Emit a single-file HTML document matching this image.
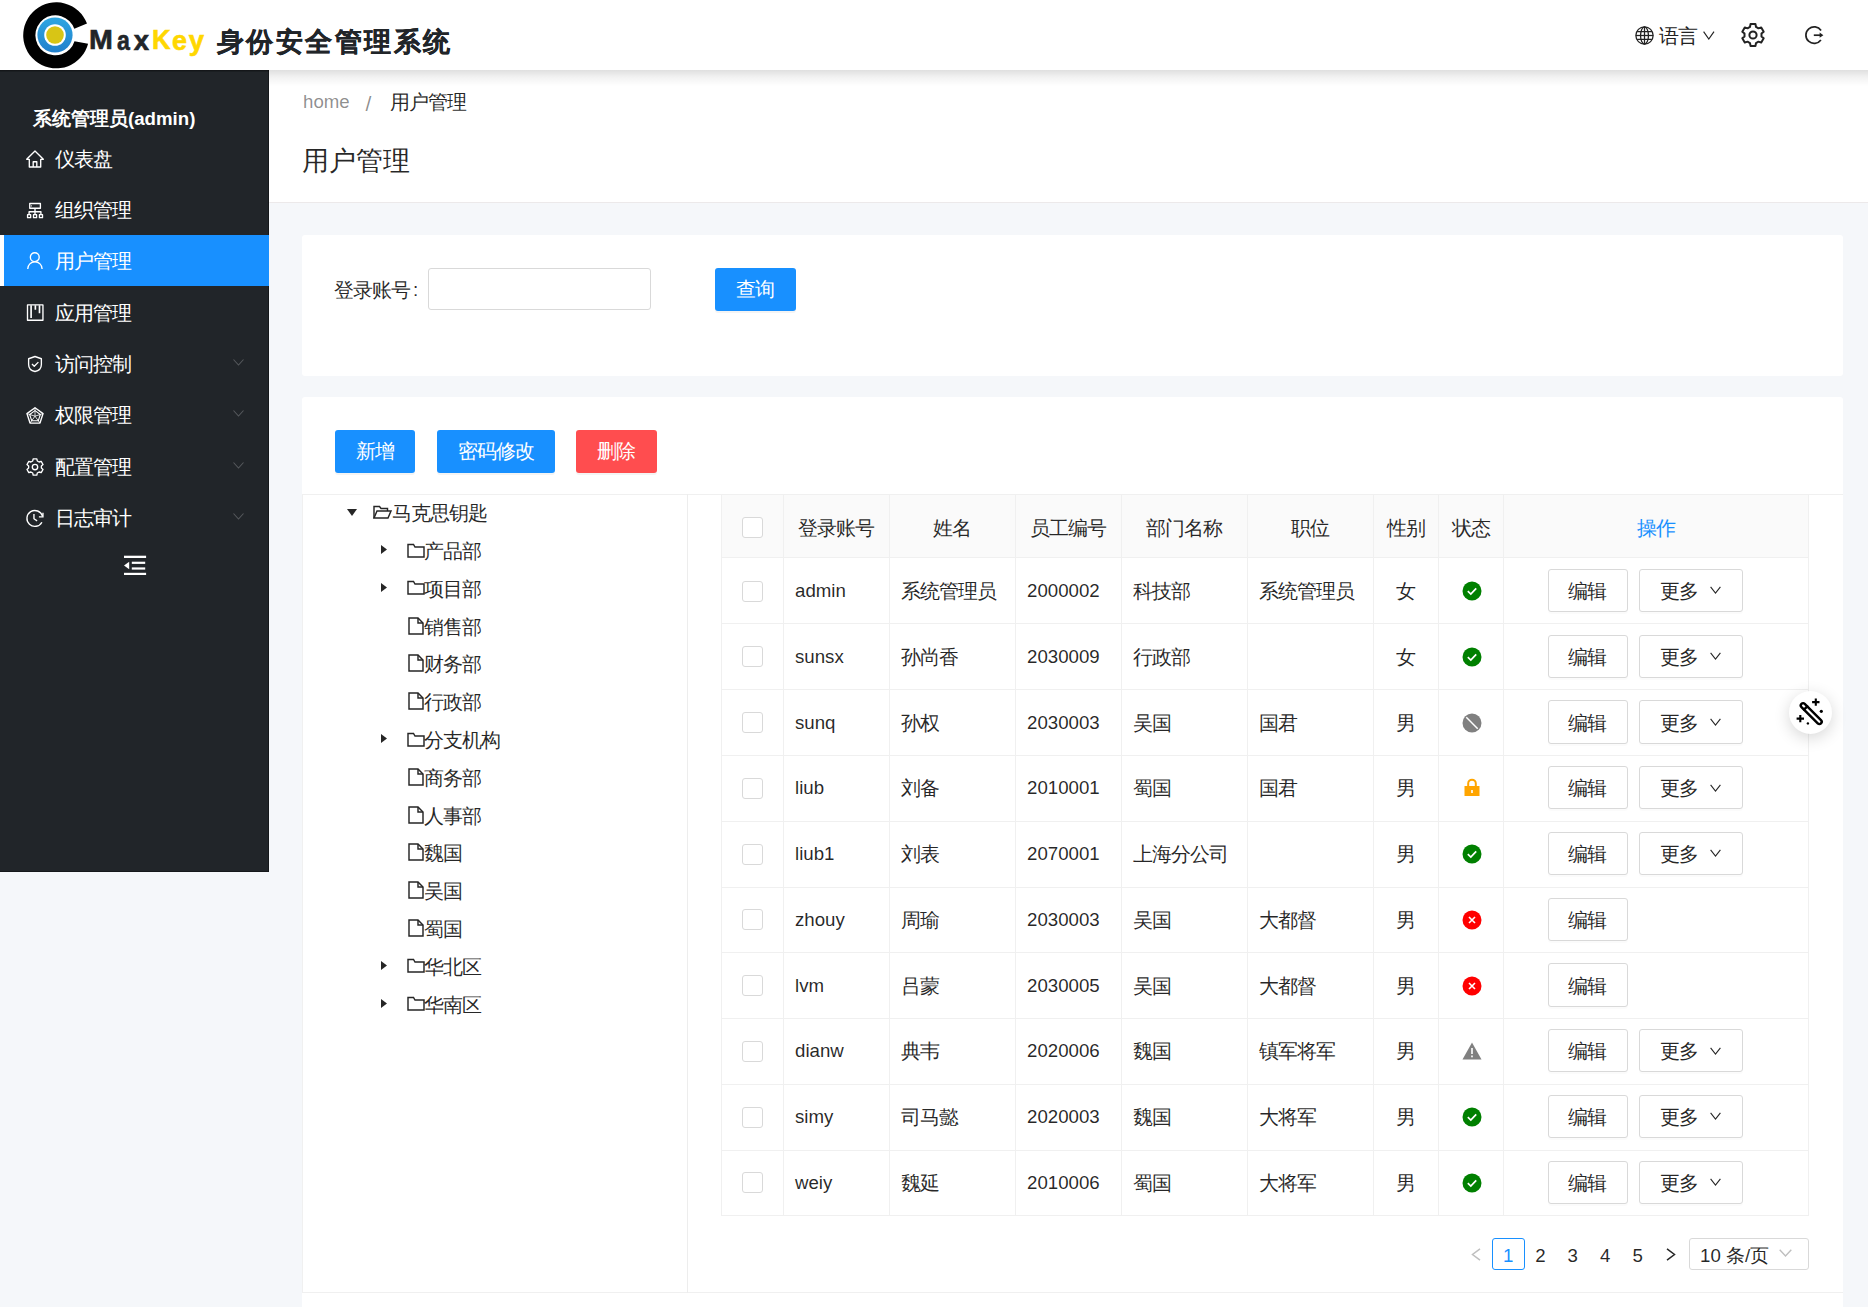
<!DOCTYPE html>
<html><head><meta charset="utf-8"><title>MaxKey</title><style>
*{box-sizing:border-box;margin:0;padding:0}
html,body{width:1868px;height:1307px;overflow:hidden}
body{position:relative;background:#f5f7fa;font-family:"Liberation Sans",sans-serif;color:rgba(0,0,0,.85)}
.t{position:absolute;white-space:nowrap}
.a{position:absolute}
svg{position:absolute;overflow:visible}
.btn{position:absolute;border-radius:3px;}
</style></head>
<body>
<div class="a" style="left:0;top:0;width:1868px;height:70px;background:#fff"></div><svg style="left:0;top:0" width="100" height="70" viewBox="0 0 100 70">
<path fill="#000" d="M86.6 23.2 A33 33 0 1 0 87.7 43.5 L74.1 40.85 A20 20 0 1 1 73.9 28.5 Z" transform="translate(0.4 0.3)"/>
<defs><linearGradient id="lg" x1="0" y1="0" x2="0" y2="1"><stop offset="0" stop-color="#2ea6e2"/><stop offset="1" stop-color="#2180cc"/></linearGradient></defs>
<circle cx="55" cy="35" r="17.6" fill="url(#lg)"/>
<circle cx="55" cy="35" r="10.8" fill="#fff"/>
<circle cx="55" cy="35" r="8.8" fill="#d8c515"/>
</svg><div class="a" style="left:0;top:0;width:0;height:0"><span class="t" style="left:89.2px;top:26.94px;font-size:27px;line-height:27px;font-weight:bold;color:#212529;-webkit-text-stroke:0.6px #212529;transform:scaleX(1.06);transform-origin:0 0">M</span><span class="t" style="left:116.6px;top:26.52px;font-size:27.5px;line-height:27.5px;font-weight:bold;color:#212529;-webkit-text-stroke:0.6px #212529;transform:scaleX(0.84);transform-origin:0 0">a</span><span class="t" style="left:133.7px;top:26.52px;font-size:27.5px;line-height:27.5px;font-weight:bold;color:#212529;-webkit-text-stroke:0.6px #212529;transform:scaleX(1.0);transform-origin:0 0">x</span><span class="t" style="left:152px;top:26.94px;font-size:27px;line-height:27px;font-weight:bold;color:#ffd700;-webkit-text-stroke:0.6px #ffd700;transform:scaleX(0.95);transform-origin:0 0">K</span><span class="t" style="left:171.8px;top:26.52px;font-size:27.5px;line-height:27.5px;font-weight:bold;color:#ffd700;-webkit-text-stroke:0.6px #ffd700;transform:scaleX(0.98);transform-origin:0 0">e</span><span class="t" style="left:188.7px;top:26.52px;font-size:27.5px;line-height:27.5px;font-weight:bold;color:#ffd700;-webkit-text-stroke:0.6px #ffd700;transform:scaleX(1.0);transform-origin:0 0">y</span></div><div class="t" style="left:216.5px;top:22px;font-size:27px;line-height:40px;font-weight:bold;letter-spacing:2.5px;color:#212529;-webkit-text-stroke:0.25px #212529">身份安全管理系统</div><svg style="left:1635.3px;top:25.5px" width="19" height="19" viewBox="0 0 24 24" fill="none" stroke="#222" stroke-width="1.6">
<circle cx="12" cy="12" r="10.9"/><ellipse cx="12" cy="12" rx="5" ry="10.9"/><line x1="12" y1="1.1" x2="12" y2="22.9"/>
<line x1="1.1" y1="12" x2="22.9" y2="12"/><path d="M2.6 7H21.4M2.6 17H21.4"/></svg><div class="t" style="left:1659px;top:22.93px;font-size:19.6px;line-height:26.14px;color:#222;letter-spacing:-0.93px;">语言</div>
<svg style="left:1703px;top:31px" width="12" height="9" viewBox="0 0 12 9" fill="none" stroke="#222" stroke-width="1.15"><path d="M0.6 0.6L5.8 8L11 0.6"/></svg><svg style="left:1740.5px;top:23px" width="24" height="24" viewBox="0 0 24 24" fill="none" stroke="#222" stroke-width="2" stroke-linejoin="round">
<path d="M8.97 3.95 L9.56 1.07 L14.44 1.07 L15.03 3.95 L17.46 5.35 L20.24 4.42 L22.69 8.65 L20.49 10.60 L20.49 13.40 L22.69 15.35 L20.24 19.58 L17.46 18.65 L15.03 20.05 L14.44 22.93 L9.56 22.93 L8.97 20.05 L6.54 18.65 L3.76 19.58 L1.31 15.35 L3.51 13.40 L3.51 10.60 L1.31 8.65 L3.76 4.42 L6.54 5.35Z"/>
<circle cx="12" cy="12" r="3.6"/></svg><svg style="left:1800px;top:20px" width="30" height="30" viewBox="0 0 30 30" fill="none" stroke="#222" stroke-width="1.7">
<path d="M21.08 10.46A8.3 8.3 0 1 0 20.91 19.98"/><path d="M13.8 15.2H20.5"/><path d="M19.6 12.6L23.4 15.2L19.6 17.8Z" fill="#222" stroke="none"/></svg><div class="a" style="left:0;top:70px;width:269px;height:802px;background:#212529;border-right:1px solid #15181b;border-bottom:1px solid #15181b"></div><div class="t" style="left:33px;top:106.43px;font-size:18.67px;line-height:26.14px;color:#fff;font-weight:bold;">系统管理员(admin)</div>
<svg style="left:26px;top:150px" width="18" height="18" viewBox="0 0 24 24" fill="none" stroke="#fff" stroke-width="1.8" stroke-linejoin="round"><path d="M0.9 12.4L12 1.2L23.1 12.4H19.6V22.7H4.4V12.4Z"/><path d="M9.6 22.7V15.6H14.4V22.7"/></svg><div class="t" style="left:55px;top:145.93px;font-size:19.6px;line-height:26.14px;color:#fff;letter-spacing:-0.93px;">仪表盘</div>
<svg style="left:26px;top:201px" width="18" height="18" viewBox="0 0 24 24" fill="none" stroke="#fff" stroke-width="1.8" stroke-linejoin="round"><rect x="5" y="3.3" width="14.2" height="6.4"/><rect x="2.1" y="18.2" width="4.1" height="4"/><rect x="10" y="18.2" width="4.1" height="4"/><rect x="17.9" y="18.2" width="4.1" height="4"/><path d="M12 9.7V14.3M4.1 18.2V14.3H19.9V18.2M12 14.3V18.2"/><path d="M7.3 5.8V7.3" stroke-width="1.2"/></svg><div class="t" style="left:55px;top:196.93px;font-size:19.6px;line-height:26.14px;color:#fff;letter-spacing:-0.93px;">组织管理</div>
<div class="a" style="left:0;top:234.5px;width:269px;height:51.5px;background:#1890ff"></div><div class="a" style="left:0;top:234.5px;width:4px;height:51.5px;background:#fff"></div><svg style="left:26px;top:252px" width="18" height="18" viewBox="0 0 24 24" fill="none" stroke="#fff" stroke-width="1.8" stroke-linejoin="round"><circle cx="11.7" cy="6.9" r="5.9"/><path d="M2.3 22.6A9.6 9.6 0 0 1 21.5 22.6"/></svg><div class="t" style="left:55px;top:247.93px;font-size:19.6px;line-height:26.14px;color:#fff;letter-spacing:-0.93px;">用户管理</div>
<svg style="left:26px;top:304px" width="18" height="18" viewBox="0 0 24 24" fill="none" stroke="#fff" stroke-width="1.8" stroke-linejoin="round"><rect x="2" y="1.2" width="20.6" height="20.4"/><path d="M6.8 1.5V18.6M12.5 1.5V7.6M18 1.5V12.3" stroke-width="2.2"/></svg><div class="t" style="left:55px;top:299.93px;font-size:19.6px;line-height:26.14px;color:#fff;letter-spacing:-0.93px;">应用管理</div>
<svg style="left:26px;top:355px" width="18" height="18" viewBox="0 0 24 24" fill="none" stroke="#fff" stroke-width="1.8" stroke-linejoin="round"><path d="M12 2L20.5 5V12.5C20.5 17.5 16.5 21 12 22C7.5 21 3.5 17.5 3.5 12.5V5Z"/><path d="M8 12L11 15L16.5 9.5"/></svg><div class="t" style="left:55px;top:350.93px;font-size:19.6px;line-height:26.14px;color:#fff;letter-spacing:-0.93px;">访问控制</div>
<svg style="left:233px;top:358.5px" width="11" height="7" viewBox="0 0 11 7" fill="none" stroke="#55585c" stroke-width="1.1"><path d="M0.5 0.5L5.5 6L10.5 0.5"/></svg><svg style="left:26px;top:406px" width="18" height="18" viewBox="0 0 24 24" fill="none" stroke="#fff" stroke-width="1.8" stroke-linejoin="round"><path d="M12.00 2.30 L22.75 10.11 L18.64 22.74 L5.36 22.74 L1.25 10.11Z"/><path d="M12.00 6.14 L19.09 11.30 L16.38 19.63 L7.62 19.63 L4.91 11.30Z" stroke-width="1.4"/><path d="M12 13.6L12.00 2.30M12 13.6L22.75 10.11M12 13.6L18.64 22.74M12 13.6L5.36 22.74M12 13.6L1.25 10.11" stroke-width="1.1"/></svg><div class="t" style="left:55px;top:401.93px;font-size:19.6px;line-height:26.14px;color:#fff;letter-spacing:-0.93px;">权限管理</div>
<svg style="left:233px;top:409.5px" width="11" height="7" viewBox="0 0 11 7" fill="none" stroke="#55585c" stroke-width="1.1"><path d="M0.5 0.5L5.5 6L10.5 0.5"/></svg><svg style="left:26px;top:458px" width="18" height="18" viewBox="0 0 24 24" fill="none" stroke="#fff" stroke-width="1.8" stroke-linejoin="round"><path d="M8.97 3.95 L9.56 1.07 L14.44 1.07 L15.03 3.95 L17.46 5.35 L20.24 4.42 L22.69 8.65 L20.49 10.60 L20.49 13.40 L22.69 15.35 L20.24 19.58 L17.46 18.65 L15.03 20.05 L14.44 22.93 L9.56 22.93 L8.97 20.05 L6.54 18.65 L3.76 19.58 L1.31 15.35 L3.51 13.40 L3.51 10.60 L1.31 8.65 L3.76 4.42 L6.54 5.35Z"/><circle cx="12" cy="12" r="3.6"/></svg><div class="t" style="left:55px;top:453.93px;font-size:19.6px;line-height:26.14px;color:#fff;letter-spacing:-0.93px;">配置管理</div>
<svg style="left:233px;top:461.5px" width="11" height="7" viewBox="0 0 11 7" fill="none" stroke="#55585c" stroke-width="1.1"><path d="M0.5 0.5L5.5 6L10.5 0.5"/></svg><svg style="left:26px;top:509px" width="18" height="18" viewBox="0 0 24 24" fill="none" stroke="#fff" stroke-width="1.8" stroke-linejoin="round"><path d="M22 9.5A10.6 10.6 0 1 0 21.2 17.6"/><path d="M22.6 5V10.4H17.2" stroke-linejoin="miter"/><path d="M10.6 6.5V13L14.8 15.8"/></svg><div class="t" style="left:55px;top:504.93px;font-size:19.6px;line-height:26.14px;color:#fff;letter-spacing:-0.93px;">日志审计</div>
<svg style="left:233px;top:512.5px" width="11" height="7" viewBox="0 0 11 7" fill="none" stroke="#55585c" stroke-width="1.1"><path d="M0.5 0.5L5.5 6L10.5 0.5"/></svg><svg style="left:124px;top:555px" width="23" height="21" viewBox="0 0 23 21" fill="#fff">
<rect x="0" y="0.7" width="22.1" height="2.3"/><rect x="7.8" y="6.7" width="13.4" height="2.2"/><rect x="7.8" y="12.4" width="13.4" height="2.2"/><rect x="0" y="17.8" width="22.1" height="2.2"/><path d="M0 10.5L5.2 6.7V14.3Z"/></svg><div class="a" style="left:269px;top:70px;width:1599px;height:133px;background:#fff;border-bottom:1px solid #ece9ea"></div><div class="a" style="left:269px;top:70px;width:1599px;height:16px;background:linear-gradient(rgba(0,0,0,.125),rgba(0,0,0,.05) 45%,rgba(0,0,0,0))"></div><div class="a" style="left:0;top:70px;width:269px;height:2px;background:linear-gradient(rgba(0,0,0,.5),rgba(0,0,0,.1))"></div><div class="t" style="left:303px;top:88.93px;font-size:18.67px;line-height:26.14px;color:rgba(0,0,0,.45);">home</div>
<div class="t" style="left:365.5px;top:89.30px;font-size:21px;line-height:29.4px;color:rgba(0,0,0,.45);">/</div>
<div class="t" style="left:390px;top:88.93px;font-size:19.6px;line-height:26.14px;color:rgba(0,0,0,.85);letter-spacing:-0.93px;">用户管理</div>
<div class="t" style="left:302px;top:142.16px;font-size:27.2px;line-height:38.08px;color:rgba(0,0,0,.85);letter-spacing:-0.05px;">用户管理</div>
<div class="a" style="left:302px;top:235px;width:1541px;height:141px;background:#fff;border-radius:3px"></div><div class="t" style="left:334px;top:276.93px;font-size:19.6px;line-height:26.14px;color:rgba(0,0,0,.85);letter-spacing:-0.93px;">登录账号</div>
<div class="t" style="left:413px;top:276.93px;font-size:18.67px;line-height:26.14px;color:rgba(0,0,0,.85);">:</div>
<div class="a" style="left:428px;top:268px;width:223px;height:42px;border:1px solid #d9d9d9;border-radius:3px;background:#fff"></div><div class="btn" style="left:715px;top:267.5px;width:81px;height:43.5px;background:#1890ff;box-shadow:0 2px 0 rgba(0,0,0,.045)"></div><div class="t" style="left:715.0px;width:81px;text-align:center;top:276.43px;font-size:19.6px;line-height:26.14px;color:#fff;letter-spacing:-0.93px;">查询</div>
<div class="a" style="left:302px;top:397px;width:1541px;height:920px;background:#fff;border-radius:3px"></div><div class="btn" style="left:335px;top:429.5px;width:80px;height:43.5px;background:#1890ff;box-shadow:0 2px 0 rgba(0,0,0,.045)"></div><div class="t" style="left:335.0px;width:80px;text-align:center;top:438.43px;font-size:19.6px;line-height:26.14px;color:#fff;letter-spacing:-0.93px;">新增</div>
<div class="btn" style="left:437px;top:429.5px;width:118px;height:43.5px;background:#1890ff;box-shadow:0 2px 0 rgba(0,0,0,.045)"></div><div class="t" style="left:437.0px;width:118px;text-align:center;top:438.43px;font-size:19.6px;line-height:26.14px;color:#fff;letter-spacing:-0.93px;">密码修改</div>
<div class="btn" style="left:576px;top:429.5px;width:81px;height:43.5px;background:#ff4d4f;box-shadow:0 2px 0 rgba(0,0,0,.045)"></div><div class="t" style="left:576.0px;width:81px;text-align:center;top:438.43px;font-size:19.6px;line-height:26.14px;color:#fff;letter-spacing:-0.93px;">删除</div>
<div class="a" style="left:302px;top:494px;width:1541px;height:799px;border:1px solid #f0f0f0;border-right:none"></div><div class="a" style="left:686.5px;top:494px;width:1.3px;height:799px;background:#ededed"></div><svg style="left:347px;top:509.20000000000005px" width="10" height="7" viewBox="0 0 10 7"><path d="M0 0H10L5 7Z" fill="rgba(0,0,0,.85)"/></svg><svg style="left:373px;top:505.20000000000005px" width="19" height="14" viewBox="0 0 19 14" fill="none" stroke="#262626" stroke-width="1.45" stroke-linejoin="miter"><path d="M1 13V1.5H6.5L8 3.5H14.5V6"/><path d="M1 13L4 6H18L15 13Z"/></svg><div class="t" style="left:392px;top:500.13px;font-size:19.6px;line-height:26.14px;color:rgba(0,0,0,.85);letter-spacing:-0.93px;">马克思钥匙</div>
<svg style="left:381px;top:545.4px" width="6" height="9" viewBox="0 0 6 9"><path d="M0 0L6 4.5L0 9Z" fill="rgba(0,0,0,.85)"/></svg><svg style="left:406.5px;top:542.5px" width="18" height="15" viewBox="0 0 18 15" fill="none" stroke="#262626" stroke-width="1.45" stroke-linejoin="miter"><path d="M1 14V1.5H6.5L8 4H17V14Z"/></svg><div class="t" style="left:424px;top:537.93px;font-size:19.6px;line-height:26.14px;color:rgba(0,0,0,.85);letter-spacing:-0.93px;">产品部</div>
<svg style="left:381px;top:583.2px" width="6" height="9" viewBox="0 0 6 9"><path d="M0 0L6 4.5L0 9Z" fill="rgba(0,0,0,.85)"/></svg><svg style="left:406.5px;top:580.3000000000001px" width="18" height="15" viewBox="0 0 18 15" fill="none" stroke="#262626" stroke-width="1.45" stroke-linejoin="miter"><path d="M1 14V1.5H6.5L8 4H17V14Z"/></svg><div class="t" style="left:424px;top:575.73px;font-size:19.6px;line-height:26.14px;color:rgba(0,0,0,.85);letter-spacing:-0.93px;">项目部</div>
<svg style="left:407.5px;top:616.6px" width="16" height="18" viewBox="0 0 16 18" fill="none" stroke="#262626" stroke-width="1.45" stroke-linejoin="miter"><path d="M1 1H10L15 6V17H1Z"/><path d="M10 1V6H15"/></svg><div class="t" style="left:424px;top:613.53px;font-size:19.6px;line-height:26.14px;color:rgba(0,0,0,.85);letter-spacing:-0.93px;">销售部</div>
<svg style="left:407.5px;top:654.4000000000001px" width="16" height="18" viewBox="0 0 16 18" fill="none" stroke="#262626" stroke-width="1.45" stroke-linejoin="miter"><path d="M1 1H10L15 6V17H1Z"/><path d="M10 1V6H15"/></svg><div class="t" style="left:424px;top:651.33px;font-size:19.6px;line-height:26.14px;color:rgba(0,0,0,.85);letter-spacing:-0.93px;">财务部</div>
<svg style="left:407.5px;top:692.2px" width="16" height="18" viewBox="0 0 16 18" fill="none" stroke="#262626" stroke-width="1.45" stroke-linejoin="miter"><path d="M1 1H10L15 6V17H1Z"/><path d="M10 1V6H15"/></svg><div class="t" style="left:424px;top:689.13px;font-size:19.6px;line-height:26.14px;color:rgba(0,0,0,.85);letter-spacing:-0.93px;">行政部</div>
<svg style="left:381px;top:734.4px" width="6" height="9" viewBox="0 0 6 9"><path d="M0 0L6 4.5L0 9Z" fill="rgba(0,0,0,.85)"/></svg><svg style="left:406.5px;top:731.5px" width="18" height="15" viewBox="0 0 18 15" fill="none" stroke="#262626" stroke-width="1.45" stroke-linejoin="miter"><path d="M1 14V1.5H6.5L8 4H17V14Z"/></svg><div class="t" style="left:424px;top:726.93px;font-size:19.6px;line-height:26.14px;color:rgba(0,0,0,.85);letter-spacing:-0.93px;">分支机构</div>
<svg style="left:407.5px;top:767.8px" width="16" height="18" viewBox="0 0 16 18" fill="none" stroke="#262626" stroke-width="1.45" stroke-linejoin="miter"><path d="M1 1H10L15 6V17H1Z"/><path d="M10 1V6H15"/></svg><div class="t" style="left:424px;top:764.73px;font-size:19.6px;line-height:26.14px;color:rgba(0,0,0,.85);letter-spacing:-0.93px;">商务部</div>
<svg style="left:407.5px;top:805.6px" width="16" height="18" viewBox="0 0 16 18" fill="none" stroke="#262626" stroke-width="1.45" stroke-linejoin="miter"><path d="M1 1H10L15 6V17H1Z"/><path d="M10 1V6H15"/></svg><div class="t" style="left:424px;top:802.53px;font-size:19.6px;line-height:26.14px;color:rgba(0,0,0,.85);letter-spacing:-0.93px;">人事部</div>
<svg style="left:407.5px;top:843.4000000000001px" width="16" height="18" viewBox="0 0 16 18" fill="none" stroke="#262626" stroke-width="1.45" stroke-linejoin="miter"><path d="M1 1H10L15 6V17H1Z"/><path d="M10 1V6H15"/></svg><div class="t" style="left:424px;top:840.33px;font-size:19.6px;line-height:26.14px;color:rgba(0,0,0,.85);letter-spacing:-0.93px;">魏国</div>
<svg style="left:407.5px;top:881.2px" width="16" height="18" viewBox="0 0 16 18" fill="none" stroke="#262626" stroke-width="1.45" stroke-linejoin="miter"><path d="M1 1H10L15 6V17H1Z"/><path d="M10 1V6H15"/></svg><div class="t" style="left:424px;top:878.13px;font-size:19.6px;line-height:26.14px;color:rgba(0,0,0,.85);letter-spacing:-0.93px;">吴国</div>
<svg style="left:407.5px;top:919.0px" width="16" height="18" viewBox="0 0 16 18" fill="none" stroke="#262626" stroke-width="1.45" stroke-linejoin="miter"><path d="M1 1H10L15 6V17H1Z"/><path d="M10 1V6H15"/></svg><div class="t" style="left:424px;top:915.93px;font-size:19.6px;line-height:26.14px;color:rgba(0,0,0,.85);letter-spacing:-0.93px;">蜀国</div>
<svg style="left:381px;top:961.1999999999999px" width="6" height="9" viewBox="0 0 6 9"><path d="M0 0L6 4.5L0 9Z" fill="rgba(0,0,0,.85)"/></svg><svg style="left:406.5px;top:958.3px" width="18" height="15" viewBox="0 0 18 15" fill="none" stroke="#262626" stroke-width="1.45" stroke-linejoin="miter"><path d="M1 14V1.5H6.5L8 4H17V14Z"/></svg><div class="t" style="left:424px;top:953.73px;font-size:19.6px;line-height:26.14px;color:rgba(0,0,0,.85);letter-spacing:-0.93px;">华北区</div>
<svg style="left:381px;top:999.0px" width="6" height="9" viewBox="0 0 6 9"><path d="M0 0L6 4.5L0 9Z" fill="rgba(0,0,0,.85)"/></svg><svg style="left:406.5px;top:996.1px" width="18" height="15" viewBox="0 0 18 15" fill="none" stroke="#262626" stroke-width="1.45" stroke-linejoin="miter"><path d="M1 14V1.5H6.5L8 4H17V14Z"/></svg><div class="t" style="left:424px;top:991.53px;font-size:19.6px;line-height:26.14px;color:rgba(0,0,0,.85);letter-spacing:-0.93px;">华南区</div>
<div class="a" style="left:721.5px;top:495px;width:1087px;height:63px;background:#fafafa"></div><div class="a" style="left:721.0px;top:495px;width:1px;height:721px;background:#f0f0f0"></div><div class="a" style="left:783.0px;top:495px;width:1px;height:721px;background:#f0f0f0"></div><div class="a" style="left:888.5px;top:495px;width:1px;height:721px;background:#f0f0f0"></div><div class="a" style="left:1014.5px;top:495px;width:1px;height:721px;background:#f0f0f0"></div><div class="a" style="left:1120.5px;top:495px;width:1px;height:721px;background:#f0f0f0"></div><div class="a" style="left:1246.5px;top:495px;width:1px;height:721px;background:#f0f0f0"></div><div class="a" style="left:1372.5px;top:495px;width:1px;height:721px;background:#f0f0f0"></div><div class="a" style="left:1438.0px;top:495px;width:1px;height:721px;background:#f0f0f0"></div><div class="a" style="left:1503.0px;top:495px;width:1px;height:721px;background:#f0f0f0"></div><div class="a" style="left:1808.0px;top:495px;width:1px;height:721px;background:#f0f0f0"></div><div class="a" style="left:721.5px;top:557.00px;width:1087px;height:1px;background:#f0f0f0"></div><div class="a" style="left:721.5px;top:623.00px;width:1087px;height:1px;background:#f0f0f0"></div><div class="a" style="left:721.5px;top:689.40px;width:1087px;height:1px;background:#f0f0f0"></div><div class="a" style="left:721.5px;top:755.15px;width:1087px;height:1px;background:#f0f0f0"></div><div class="a" style="left:721.5px;top:820.90px;width:1087px;height:1px;background:#f0f0f0"></div><div class="a" style="left:721.5px;top:886.65px;width:1087px;height:1px;background:#f0f0f0"></div><div class="a" style="left:721.5px;top:952.40px;width:1087px;height:1px;background:#f0f0f0"></div><div class="a" style="left:721.5px;top:1018.15px;width:1087px;height:1px;background:#f0f0f0"></div><div class="a" style="left:721.5px;top:1083.90px;width:1087px;height:1px;background:#f0f0f0"></div><div class="a" style="left:721.5px;top:1149.65px;width:1087px;height:1px;background:#f0f0f0"></div><div class="a" style="left:721.5px;top:1215.40px;width:1087px;height:1px;background:#f0f0f0"></div><div class="a" style="left:742px;top:517px;width:21px;height:21px;border:1px solid #d9d9d9;border-radius:3px;background:#fff"></div><div class="t" style="left:766.25px;width:140px;text-align:center;top:515.13px;font-size:19.6px;line-height:26.14px;color:rgba(0,0,0,.85);letter-spacing:-0.93px;">登录账号</div>
<div class="t" style="left:882.0px;width:140px;text-align:center;top:515.13px;font-size:19.6px;line-height:26.14px;color:rgba(0,0,0,.85);letter-spacing:-0.93px;">姓名</div>
<div class="t" style="left:998.0px;width:140px;text-align:center;top:515.13px;font-size:19.6px;line-height:26.14px;color:rgba(0,0,0,.85);letter-spacing:-0.93px;">员工编号</div>
<div class="t" style="left:1114.0px;width:140px;text-align:center;top:515.13px;font-size:19.6px;line-height:26.14px;color:rgba(0,0,0,.85);letter-spacing:-0.93px;">部门名称</div>
<div class="t" style="left:1240.0px;width:140px;text-align:center;top:515.13px;font-size:19.6px;line-height:26.14px;color:rgba(0,0,0,.85);letter-spacing:-0.93px;">职位</div>
<div class="t" style="left:1335.75px;width:140px;text-align:center;top:515.13px;font-size:19.6px;line-height:26.14px;color:rgba(0,0,0,.85);letter-spacing:-0.93px;">性别</div>
<div class="t" style="left:1401.0px;width:140px;text-align:center;top:515.13px;font-size:19.6px;line-height:26.14px;color:rgba(0,0,0,.85);letter-spacing:-0.93px;">状态</div>
<div class="t" style="left:1586.0px;width:140px;text-align:center;top:515.13px;font-size:19.6px;line-height:26.14px;color:#1890ff;letter-spacing:-0.93px;">操作</div>
<div class="a" style="left:742px;top:580.67px;width:21px;height:21px;border:1px solid #d9d9d9;border-radius:3px;background:#fff"></div><div class="t" style="left:795px;top:578.10px;font-size:18.67px;line-height:26.14px;color:rgba(0,0,0,.85);">admin</div>
<div class="t" style="left:901px;top:578.10px;font-size:19.6px;line-height:26.14px;color:rgba(0,0,0,.85);letter-spacing:-0.93px;">系统管理员</div>
<div class="t" style="left:1027px;top:578.10px;font-size:18.67px;line-height:26.14px;color:rgba(0,0,0,.85);">2000002</div>
<div class="t" style="left:1133px;top:578.10px;font-size:19.6px;line-height:26.14px;color:rgba(0,0,0,.85);letter-spacing:-0.93px;">科技部</div>
<div class="t" style="left:1259px;top:578.10px;font-size:19.6px;line-height:26.14px;color:rgba(0,0,0,.85);letter-spacing:-0.93px;">系统管理员</div>
<div class="t" style="left:1375.5px;width:60px;text-align:center;top:578.10px;font-size:19.6px;line-height:26.14px;color:rgba(0,0,0,.85);letter-spacing:-0.93px;">女</div>
<svg style="left:1462px;top:581.17px" width="20" height="20" viewBox="0 0 20 20"><circle cx="10" cy="10" r="9.5" fill="#008000"/><path d="M5.8 10.2L8.8 13L14.2 7.3" fill="none" stroke="#fff" stroke-width="1.7"/></svg><div class="btn" style="left:1547.5px;top:568.88px;width:80px;height:43.2px;border:1px solid #d9d9d9;background:#fff;box-shadow:0 2px 0 rgba(0,0,0,.015)"></div><div class="t" style="left:1547.5px;width:80px;text-align:center;top:578.10px;font-size:19.6px;line-height:26.14px;color:rgba(0,0,0,.85);letter-spacing:-0.93px;">编辑</div>
<div class="btn" style="left:1638.5px;top:568.88px;width:104px;height:43.2px;border:1px solid #d9d9d9;background:#fff;box-shadow:0 2px 0 rgba(0,0,0,.015)"></div><div class="t" style="left:1660px;top:578.10px;font-size:19.6px;line-height:26.14px;color:rgba(0,0,0,.85);letter-spacing:-0.93px;">更多</div>
<svg style="left:1709.5px;top:586.47px" width="11" height="8.5" viewBox="0 0 11 8.5" fill="none" stroke="rgba(0,0,0,.85)" stroke-width="1.1"><path d="M0.6 0.8L5.5 7.2L10.4 0.8"/></svg><div class="a" style="left:742px;top:646.42px;width:21px;height:21px;border:1px solid #d9d9d9;border-radius:3px;background:#fff"></div><div class="t" style="left:795px;top:643.85px;font-size:18.67px;line-height:26.14px;color:rgba(0,0,0,.85);">sunsx</div>
<div class="t" style="left:901px;top:643.85px;font-size:19.6px;line-height:26.14px;color:rgba(0,0,0,.85);letter-spacing:-0.93px;">孙尚香</div>
<div class="t" style="left:1027px;top:643.85px;font-size:18.67px;line-height:26.14px;color:rgba(0,0,0,.85);">2030009</div>
<div class="t" style="left:1133px;top:643.85px;font-size:19.6px;line-height:26.14px;color:rgba(0,0,0,.85);letter-spacing:-0.93px;">行政部</div>
<div class="t" style="left:1259px;top:643.85px;font-size:18.67px;line-height:26.14px;color:rgba(0,0,0,.85);"></div>
<div class="t" style="left:1375.5px;width:60px;text-align:center;top:643.85px;font-size:19.6px;line-height:26.14px;color:rgba(0,0,0,.85);letter-spacing:-0.93px;">女</div>
<svg style="left:1462px;top:646.92px" width="20" height="20" viewBox="0 0 20 20"><circle cx="10" cy="10" r="9.5" fill="#008000"/><path d="M5.8 10.2L8.8 13L14.2 7.3" fill="none" stroke="#fff" stroke-width="1.7"/></svg><div class="btn" style="left:1547.5px;top:634.62px;width:80px;height:43.2px;border:1px solid #d9d9d9;background:#fff;box-shadow:0 2px 0 rgba(0,0,0,.015)"></div><div class="t" style="left:1547.5px;width:80px;text-align:center;top:643.85px;font-size:19.6px;line-height:26.14px;color:rgba(0,0,0,.85);letter-spacing:-0.93px;">编辑</div>
<div class="btn" style="left:1638.5px;top:634.62px;width:104px;height:43.2px;border:1px solid #d9d9d9;background:#fff;box-shadow:0 2px 0 rgba(0,0,0,.015)"></div><div class="t" style="left:1660px;top:643.85px;font-size:19.6px;line-height:26.14px;color:rgba(0,0,0,.85);letter-spacing:-0.93px;">更多</div>
<svg style="left:1709.5px;top:652.22px" width="11" height="8.5" viewBox="0 0 11 8.5" fill="none" stroke="rgba(0,0,0,.85)" stroke-width="1.1"><path d="M0.6 0.8L5.5 7.2L10.4 0.8"/></svg><div class="a" style="left:742px;top:712.17px;width:21px;height:21px;border:1px solid #d9d9d9;border-radius:3px;background:#fff"></div><div class="t" style="left:795px;top:709.60px;font-size:18.67px;line-height:26.14px;color:rgba(0,0,0,.85);">sunq</div>
<div class="t" style="left:901px;top:709.60px;font-size:19.6px;line-height:26.14px;color:rgba(0,0,0,.85);letter-spacing:-0.93px;">孙权</div>
<div class="t" style="left:1027px;top:709.60px;font-size:18.67px;line-height:26.14px;color:rgba(0,0,0,.85);">2030003</div>
<div class="t" style="left:1133px;top:709.60px;font-size:19.6px;line-height:26.14px;color:rgba(0,0,0,.85);letter-spacing:-0.93px;">吴国</div>
<div class="t" style="left:1259px;top:709.60px;font-size:19.6px;line-height:26.14px;color:rgba(0,0,0,.85);letter-spacing:-0.93px;">国君</div>
<div class="t" style="left:1375.5px;width:60px;text-align:center;top:709.60px;font-size:19.6px;line-height:26.14px;color:rgba(0,0,0,.85);letter-spacing:-0.93px;">男</div>
<svg style="left:1462px;top:712.67px" width="20" height="20" viewBox="0 0 20 20"><circle cx="10" cy="10" r="9.5" fill="#808080"/><path d="M4.3 4.3L15.7 15.7" stroke="#fff" stroke-width="1.5"/></svg><div class="btn" style="left:1547.5px;top:700.38px;width:80px;height:43.2px;border:1px solid #d9d9d9;background:#fff;box-shadow:0 2px 0 rgba(0,0,0,.015)"></div><div class="t" style="left:1547.5px;width:80px;text-align:center;top:709.60px;font-size:19.6px;line-height:26.14px;color:rgba(0,0,0,.85);letter-spacing:-0.93px;">编辑</div>
<div class="btn" style="left:1638.5px;top:700.38px;width:104px;height:43.2px;border:1px solid #d9d9d9;background:#fff;box-shadow:0 2px 0 rgba(0,0,0,.015)"></div><div class="t" style="left:1660px;top:709.60px;font-size:19.6px;line-height:26.14px;color:rgba(0,0,0,.85);letter-spacing:-0.93px;">更多</div>
<svg style="left:1709.5px;top:717.97px" width="11" height="8.5" viewBox="0 0 11 8.5" fill="none" stroke="rgba(0,0,0,.85)" stroke-width="1.1"><path d="M0.6 0.8L5.5 7.2L10.4 0.8"/></svg><div class="a" style="left:742px;top:777.92px;width:21px;height:21px;border:1px solid #d9d9d9;border-radius:3px;background:#fff"></div><div class="t" style="left:795px;top:775.35px;font-size:18.67px;line-height:26.14px;color:rgba(0,0,0,.85);">liub</div>
<div class="t" style="left:901px;top:775.35px;font-size:19.6px;line-height:26.14px;color:rgba(0,0,0,.85);letter-spacing:-0.93px;">刘备</div>
<div class="t" style="left:1027px;top:775.35px;font-size:18.67px;line-height:26.14px;color:rgba(0,0,0,.85);">2010001</div>
<div class="t" style="left:1133px;top:775.35px;font-size:19.6px;line-height:26.14px;color:rgba(0,0,0,.85);letter-spacing:-0.93px;">蜀国</div>
<div class="t" style="left:1259px;top:775.35px;font-size:19.6px;line-height:26.14px;color:rgba(0,0,0,.85);letter-spacing:-0.93px;">国君</div>
<div class="t" style="left:1375.5px;width:60px;text-align:center;top:775.35px;font-size:19.6px;line-height:26.14px;color:rgba(0,0,0,.85);letter-spacing:-0.93px;">男</div>
<svg style="left:1462px;top:778.42px" width="20" height="20" viewBox="0 0 20 20"><path d="M6.2 8.5V5.5A3.8 3.8 0 0 1 13.8 5.5V8.5" fill="none" stroke="#ffa500" stroke-width="2"/><rect x="2.5" y="8" width="15" height="10" fill="#ffa500"/><rect x="9.2" y="12" width="1.6" height="3" fill="#fff"/></svg><div class="btn" style="left:1547.5px;top:766.12px;width:80px;height:43.2px;border:1px solid #d9d9d9;background:#fff;box-shadow:0 2px 0 rgba(0,0,0,.015)"></div><div class="t" style="left:1547.5px;width:80px;text-align:center;top:775.35px;font-size:19.6px;line-height:26.14px;color:rgba(0,0,0,.85);letter-spacing:-0.93px;">编辑</div>
<div class="btn" style="left:1638.5px;top:766.12px;width:104px;height:43.2px;border:1px solid #d9d9d9;background:#fff;box-shadow:0 2px 0 rgba(0,0,0,.015)"></div><div class="t" style="left:1660px;top:775.35px;font-size:19.6px;line-height:26.14px;color:rgba(0,0,0,.85);letter-spacing:-0.93px;">更多</div>
<svg style="left:1709.5px;top:783.72px" width="11" height="8.5" viewBox="0 0 11 8.5" fill="none" stroke="rgba(0,0,0,.85)" stroke-width="1.1"><path d="M0.6 0.8L5.5 7.2L10.4 0.8"/></svg><div class="a" style="left:742px;top:843.67px;width:21px;height:21px;border:1px solid #d9d9d9;border-radius:3px;background:#fff"></div><div class="t" style="left:795px;top:841.10px;font-size:18.67px;line-height:26.14px;color:rgba(0,0,0,.85);">liub1</div>
<div class="t" style="left:901px;top:841.10px;font-size:19.6px;line-height:26.14px;color:rgba(0,0,0,.85);letter-spacing:-0.93px;">刘表</div>
<div class="t" style="left:1027px;top:841.10px;font-size:18.67px;line-height:26.14px;color:rgba(0,0,0,.85);">2070001</div>
<div class="t" style="left:1133px;top:841.10px;font-size:19.6px;line-height:26.14px;color:rgba(0,0,0,.85);letter-spacing:-0.93px;">上海分公司</div>
<div class="t" style="left:1259px;top:841.10px;font-size:18.67px;line-height:26.14px;color:rgba(0,0,0,.85);"></div>
<div class="t" style="left:1375.5px;width:60px;text-align:center;top:841.10px;font-size:19.6px;line-height:26.14px;color:rgba(0,0,0,.85);letter-spacing:-0.93px;">男</div>
<svg style="left:1462px;top:844.17px" width="20" height="20" viewBox="0 0 20 20"><circle cx="10" cy="10" r="9.5" fill="#008000"/><path d="M5.8 10.2L8.8 13L14.2 7.3" fill="none" stroke="#fff" stroke-width="1.7"/></svg><div class="btn" style="left:1547.5px;top:831.88px;width:80px;height:43.2px;border:1px solid #d9d9d9;background:#fff;box-shadow:0 2px 0 rgba(0,0,0,.015)"></div><div class="t" style="left:1547.5px;width:80px;text-align:center;top:841.10px;font-size:19.6px;line-height:26.14px;color:rgba(0,0,0,.85);letter-spacing:-0.93px;">编辑</div>
<div class="btn" style="left:1638.5px;top:831.88px;width:104px;height:43.2px;border:1px solid #d9d9d9;background:#fff;box-shadow:0 2px 0 rgba(0,0,0,.015)"></div><div class="t" style="left:1660px;top:841.10px;font-size:19.6px;line-height:26.14px;color:rgba(0,0,0,.85);letter-spacing:-0.93px;">更多</div>
<svg style="left:1709.5px;top:849.47px" width="11" height="8.5" viewBox="0 0 11 8.5" fill="none" stroke="rgba(0,0,0,.85)" stroke-width="1.1"><path d="M0.6 0.8L5.5 7.2L10.4 0.8"/></svg><div class="a" style="left:742px;top:909.42px;width:21px;height:21px;border:1px solid #d9d9d9;border-radius:3px;background:#fff"></div><div class="t" style="left:795px;top:906.85px;font-size:18.67px;line-height:26.14px;color:rgba(0,0,0,.85);">zhouy</div>
<div class="t" style="left:901px;top:906.85px;font-size:19.6px;line-height:26.14px;color:rgba(0,0,0,.85);letter-spacing:-0.93px;">周瑜</div>
<div class="t" style="left:1027px;top:906.85px;font-size:18.67px;line-height:26.14px;color:rgba(0,0,0,.85);">2030003</div>
<div class="t" style="left:1133px;top:906.85px;font-size:19.6px;line-height:26.14px;color:rgba(0,0,0,.85);letter-spacing:-0.93px;">吴国</div>
<div class="t" style="left:1259px;top:906.85px;font-size:19.6px;line-height:26.14px;color:rgba(0,0,0,.85);letter-spacing:-0.93px;">大都督</div>
<div class="t" style="left:1375.5px;width:60px;text-align:center;top:906.85px;font-size:19.6px;line-height:26.14px;color:rgba(0,0,0,.85);letter-spacing:-0.93px;">男</div>
<svg style="left:1462px;top:909.92px" width="20" height="20" viewBox="0 0 20 20"><circle cx="10" cy="10" r="9.5" fill="#f00"/><path d="M7 7L13 13M13 7L7 13" stroke="#fff" stroke-width="1.6"/></svg><div class="btn" style="left:1547.5px;top:897.62px;width:80px;height:43.2px;border:1px solid #d9d9d9;background:#fff;box-shadow:0 2px 0 rgba(0,0,0,.015)"></div><div class="t" style="left:1547.5px;width:80px;text-align:center;top:906.85px;font-size:19.6px;line-height:26.14px;color:rgba(0,0,0,.85);letter-spacing:-0.93px;">编辑</div>
<div class="a" style="left:742px;top:975.17px;width:21px;height:21px;border:1px solid #d9d9d9;border-radius:3px;background:#fff"></div><div class="t" style="left:795px;top:972.60px;font-size:18.67px;line-height:26.14px;color:rgba(0,0,0,.85);">lvm</div>
<div class="t" style="left:901px;top:972.60px;font-size:19.6px;line-height:26.14px;color:rgba(0,0,0,.85);letter-spacing:-0.93px;">吕蒙</div>
<div class="t" style="left:1027px;top:972.60px;font-size:18.67px;line-height:26.14px;color:rgba(0,0,0,.85);">2030005</div>
<div class="t" style="left:1133px;top:972.60px;font-size:19.6px;line-height:26.14px;color:rgba(0,0,0,.85);letter-spacing:-0.93px;">吴国</div>
<div class="t" style="left:1259px;top:972.60px;font-size:19.6px;line-height:26.14px;color:rgba(0,0,0,.85);letter-spacing:-0.93px;">大都督</div>
<div class="t" style="left:1375.5px;width:60px;text-align:center;top:972.60px;font-size:19.6px;line-height:26.14px;color:rgba(0,0,0,.85);letter-spacing:-0.93px;">男</div>
<svg style="left:1462px;top:975.67px" width="20" height="20" viewBox="0 0 20 20"><circle cx="10" cy="10" r="9.5" fill="#f00"/><path d="M7 7L13 13M13 7L7 13" stroke="#fff" stroke-width="1.6"/></svg><div class="btn" style="left:1547.5px;top:963.38px;width:80px;height:43.2px;border:1px solid #d9d9d9;background:#fff;box-shadow:0 2px 0 rgba(0,0,0,.015)"></div><div class="t" style="left:1547.5px;width:80px;text-align:center;top:972.60px;font-size:19.6px;line-height:26.14px;color:rgba(0,0,0,.85);letter-spacing:-0.93px;">编辑</div>
<div class="a" style="left:742px;top:1040.93px;width:21px;height:21px;border:1px solid #d9d9d9;border-radius:3px;background:#fff"></div><div class="t" style="left:795px;top:1038.36px;font-size:18.67px;line-height:26.14px;color:rgba(0,0,0,.85);">dianw</div>
<div class="t" style="left:901px;top:1038.36px;font-size:19.6px;line-height:26.14px;color:rgba(0,0,0,.85);letter-spacing:-0.93px;">典韦</div>
<div class="t" style="left:1027px;top:1038.36px;font-size:18.67px;line-height:26.14px;color:rgba(0,0,0,.85);">2020006</div>
<div class="t" style="left:1133px;top:1038.36px;font-size:19.6px;line-height:26.14px;color:rgba(0,0,0,.85);letter-spacing:-0.93px;">魏国</div>
<div class="t" style="left:1259px;top:1038.36px;font-size:19.6px;line-height:26.14px;color:rgba(0,0,0,.85);letter-spacing:-0.93px;">镇军将军</div>
<div class="t" style="left:1375.5px;width:60px;text-align:center;top:1038.36px;font-size:19.6px;line-height:26.14px;color:rgba(0,0,0,.85);letter-spacing:-0.93px;">男</div>
<svg style="left:1462px;top:1041.43px" width="20" height="20" viewBox="0 0 20 20"><path d="M10 1.5L19.5 18.5H0.5Z" fill="#808080"/><rect x="9.2" y="7" width="1.6" height="6" fill="#fff"/><rect x="9.2" y="14.5" width="1.6" height="1.8" fill="#fff"/></svg><div class="btn" style="left:1547.5px;top:1029.13px;width:80px;height:43.2px;border:1px solid #d9d9d9;background:#fff;box-shadow:0 2px 0 rgba(0,0,0,.015)"></div><div class="t" style="left:1547.5px;width:80px;text-align:center;top:1038.36px;font-size:19.6px;line-height:26.14px;color:rgba(0,0,0,.85);letter-spacing:-0.93px;">编辑</div>
<div class="btn" style="left:1638.5px;top:1029.13px;width:104px;height:43.2px;border:1px solid #d9d9d9;background:#fff;box-shadow:0 2px 0 rgba(0,0,0,.015)"></div><div class="t" style="left:1660px;top:1038.36px;font-size:19.6px;line-height:26.14px;color:rgba(0,0,0,.85);letter-spacing:-0.93px;">更多</div>
<svg style="left:1709.5px;top:1046.73px" width="11" height="8.5" viewBox="0 0 11 8.5" fill="none" stroke="rgba(0,0,0,.85)" stroke-width="1.1"><path d="M0.6 0.8L5.5 7.2L10.4 0.8"/></svg><div class="a" style="left:742px;top:1106.68px;width:21px;height:21px;border:1px solid #d9d9d9;border-radius:3px;background:#fff"></div><div class="t" style="left:795px;top:1104.11px;font-size:18.67px;line-height:26.14px;color:rgba(0,0,0,.85);">simy</div>
<div class="t" style="left:901px;top:1104.11px;font-size:19.6px;line-height:26.14px;color:rgba(0,0,0,.85);letter-spacing:-0.93px;">司马懿</div>
<div class="t" style="left:1027px;top:1104.11px;font-size:18.67px;line-height:26.14px;color:rgba(0,0,0,.85);">2020003</div>
<div class="t" style="left:1133px;top:1104.11px;font-size:19.6px;line-height:26.14px;color:rgba(0,0,0,.85);letter-spacing:-0.93px;">魏国</div>
<div class="t" style="left:1259px;top:1104.11px;font-size:19.6px;line-height:26.14px;color:rgba(0,0,0,.85);letter-spacing:-0.93px;">大将军</div>
<div class="t" style="left:1375.5px;width:60px;text-align:center;top:1104.11px;font-size:19.6px;line-height:26.14px;color:rgba(0,0,0,.85);letter-spacing:-0.93px;">男</div>
<svg style="left:1462px;top:1107.18px" width="20" height="20" viewBox="0 0 20 20"><circle cx="10" cy="10" r="9.5" fill="#008000"/><path d="M5.8 10.2L8.8 13L14.2 7.3" fill="none" stroke="#fff" stroke-width="1.7"/></svg><div class="btn" style="left:1547.5px;top:1094.88px;width:80px;height:43.2px;border:1px solid #d9d9d9;background:#fff;box-shadow:0 2px 0 rgba(0,0,0,.015)"></div><div class="t" style="left:1547.5px;width:80px;text-align:center;top:1104.11px;font-size:19.6px;line-height:26.14px;color:rgba(0,0,0,.85);letter-spacing:-0.93px;">编辑</div>
<div class="btn" style="left:1638.5px;top:1094.88px;width:104px;height:43.2px;border:1px solid #d9d9d9;background:#fff;box-shadow:0 2px 0 rgba(0,0,0,.015)"></div><div class="t" style="left:1660px;top:1104.11px;font-size:19.6px;line-height:26.14px;color:rgba(0,0,0,.85);letter-spacing:-0.93px;">更多</div>
<svg style="left:1709.5px;top:1112.48px" width="11" height="8.5" viewBox="0 0 11 8.5" fill="none" stroke="rgba(0,0,0,.85)" stroke-width="1.1"><path d="M0.6 0.8L5.5 7.2L10.4 0.8"/></svg><div class="a" style="left:742px;top:1172.43px;width:21px;height:21px;border:1px solid #d9d9d9;border-radius:3px;background:#fff"></div><div class="t" style="left:795px;top:1169.86px;font-size:18.67px;line-height:26.14px;color:rgba(0,0,0,.85);">weiy</div>
<div class="t" style="left:901px;top:1169.86px;font-size:19.6px;line-height:26.14px;color:rgba(0,0,0,.85);letter-spacing:-0.93px;">魏延</div>
<div class="t" style="left:1027px;top:1169.86px;font-size:18.67px;line-height:26.14px;color:rgba(0,0,0,.85);">2010006</div>
<div class="t" style="left:1133px;top:1169.86px;font-size:19.6px;line-height:26.14px;color:rgba(0,0,0,.85);letter-spacing:-0.93px;">蜀国</div>
<div class="t" style="left:1259px;top:1169.86px;font-size:19.6px;line-height:26.14px;color:rgba(0,0,0,.85);letter-spacing:-0.93px;">大将军</div>
<div class="t" style="left:1375.5px;width:60px;text-align:center;top:1169.86px;font-size:19.6px;line-height:26.14px;color:rgba(0,0,0,.85);letter-spacing:-0.93px;">男</div>
<svg style="left:1462px;top:1172.93px" width="20" height="20" viewBox="0 0 20 20"><circle cx="10" cy="10" r="9.5" fill="#008000"/><path d="M5.8 10.2L8.8 13L14.2 7.3" fill="none" stroke="#fff" stroke-width="1.7"/></svg><div class="btn" style="left:1547.5px;top:1160.63px;width:80px;height:43.2px;border:1px solid #d9d9d9;background:#fff;box-shadow:0 2px 0 rgba(0,0,0,.015)"></div><div class="t" style="left:1547.5px;width:80px;text-align:center;top:1169.86px;font-size:19.6px;line-height:26.14px;color:rgba(0,0,0,.85);letter-spacing:-0.93px;">编辑</div>
<div class="btn" style="left:1638.5px;top:1160.63px;width:104px;height:43.2px;border:1px solid #d9d9d9;background:#fff;box-shadow:0 2px 0 rgba(0,0,0,.015)"></div><div class="t" style="left:1660px;top:1169.86px;font-size:19.6px;line-height:26.14px;color:rgba(0,0,0,.85);letter-spacing:-0.93px;">更多</div>
<svg style="left:1709.5px;top:1178.23px" width="11" height="8.5" viewBox="0 0 11 8.5" fill="none" stroke="rgba(0,0,0,.85)" stroke-width="1.1"><path d="M0.6 0.8L5.5 7.2L10.4 0.8"/></svg><svg style="left:1471px;top:1248px" width="10" height="13" viewBox="0 0 10 13" fill="none" stroke="#bfbfbf" stroke-width="1.5"><path d="M9 0.8L1.5 6.5L9 12.2"/></svg><div class="a" style="left:1492px;top:1238px;width:32.5px;height:32px;border:1px solid #1890ff;border-radius:3px"></div><div class="t" style="left:1492.2px;width:32px;text-align:center;top:1243.43px;font-size:18.67px;line-height:26.14px;color:#1890ff;">1</div>
<div class="t" style="left:1524.4px;width:32px;text-align:center;top:1243.43px;font-size:18.67px;line-height:26.14px;color:rgba(0,0,0,.85);">2</div>
<div class="t" style="left:1556.8000000000002px;width:32px;text-align:center;top:1243.43px;font-size:18.67px;line-height:26.14px;color:rgba(0,0,0,.85);">3</div>
<div class="t" style="left:1589.2px;width:32px;text-align:center;top:1243.43px;font-size:18.67px;line-height:26.14px;color:rgba(0,0,0,.85);">4</div>
<div class="t" style="left:1621.6000000000001px;width:32px;text-align:center;top:1243.43px;font-size:18.67px;line-height:26.14px;color:rgba(0,0,0,.85);">5</div>
<svg style="left:1666px;top:1248px" width="10" height="13" viewBox="0 0 10 13" fill="none" stroke="rgba(0,0,0,.85)" stroke-width="1.5"><path d="M1 0.8L8.5 6.5L1 12.2"/></svg><div class="a" style="left:1689px;top:1238px;width:120px;height:32px;border:1px solid #d9d9d9;border-radius:3px;background:#fff"></div><div class="t" style="left:1700px;top:1243.43px;font-size:18.67px;line-height:26.14px;color:rgba(0,0,0,.85);">10 条/页</div>
<svg style="left:1779px;top:1249px" width="13" height="8" viewBox="0 0 13 8" fill="none" stroke="#bfbfbf" stroke-width="1.4"><path d="M0.7 0.7L6.5 7L12.3 0.7"/></svg><div class="a" style="left:1789px;top:691px;width:43px;height:43px;border-radius:50%;background:#fff;box-shadow:0 4px 16px rgba(0,0,0,.16)"></div><svg style="left:1797px;top:699px" width="28" height="28" viewBox="0 0 28 28" fill="none" stroke="#000" stroke-width="2.4" stroke-linecap="round">
<g transform="translate(14.3 14.7) rotate(45)"><rect x="-13.9" y="-2.3" width="27.6" height="4.6" rx="2.3"/><line x1="-8" y1="-2.3" x2="-8" y2="2.3"/></g>
<path d="M18.8 -0.6V6.8M15.1 3.1H22.5" stroke-linecap="butt" stroke-width="2.1"/><path d="M3.3 15.9V23.3M-0.4 19.6H7" stroke-linecap="butt" stroke-width="2.1"/>
<circle cx="24.3" cy="12.3" r="1.6" fill="#000" stroke="none"/><circle cx="10.9" cy="24.4" r="1.2" fill="#000" stroke="none"/></svg>
</body></html>
